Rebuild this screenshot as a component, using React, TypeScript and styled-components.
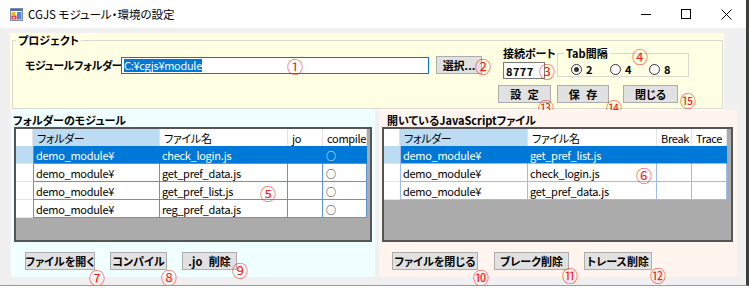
import React from "react";
import styled, { createGlobalStyle } from "styled-components";

const GlobalStyle = createGlobalStyle`
  html, body {
    margin: 0;
    padding: 0;
    background: #ffffff;
  }
  body {
    font-family: "Noto Sans CJK JP", "Noto Sans", sans-serif;
    font-size: 12px;
    color: #000;
  }
  * {
    box-sizing: border-box;
  }
`;

const Window = styled.div`
  position: relative;
  width: 749px;
  height: 286px;
  background: #f0f0f0;
  border-right: 3px solid #3b3f3b;
  border-bottom: 1px solid #9a9a9a;
  display: flex;
  flex-direction: column;
  overflow: hidden;
  font-feature-settings: "palt";
`;

const TitleBar = styled.div`
  height: 28px;
  background: #ffffff;
  display: flex;
  align-items: center;
  padding-left: 10px;
  flex-shrink: 0;
`;

const Title = styled.span`
  margin-left: 5px;
  font-size: 11.5px;
  color: #000;
`;

const CaptionButtons = styled.div`
  margin-left: auto;
  display: flex;
  height: 100%;
`;

const CaptionButton = styled.div`
  width: 40px;
  height: 28px;
  display: flex;
  align-items: center;
  justify-content: center;
`;

const Client = styled.div`
  flex: 1;
  display: flex;
  flex-direction: column;
  padding: 5px 0 0 10px;
`;

const ProjectPanel = styled.div`
  position: relative;
  width: 714px;
  height: 77px;
  background: #ffffe4;
  padding: 1px 1px 1px 2px;
  display: flex;
  overflow: hidden;
  flex-shrink: 0;
`;

const Frame = styled.fieldset<{ $w?: number; $h?: number }>`
  margin: 0;
  padding: 0;
  border: 1px solid #d9d9d0;
  ${(p) => (p.$w ? `width: ${p.$w}px;` : "flex: 1;")}
  ${(p) => (p.$h ? `height: ${p.$h}px;` : "")}
`;

const Legend = styled.legend<{ $indent: number }>`
  margin-left: ${(p) => p.$indent}px;
  padding: 0 2px;
  font-size: 11px;
  font-weight: bold;
  line-height: 13px;
`;

const FrameBody = styled.div`
  display: flex;
  align-items: flex-start;
  padding: 0 0 0 12px;
`;

const FolderRow = styled.div`
  display: flex;
  align-items: center;
  margin-top: 9px;
`;

const FieldLabel = styled.span`
  width: 96px;
  flex-shrink: 0;
  font-size: 11px;
  font-weight: bold;
  letter-spacing: -0.5px;
  white-space: nowrap;
`;

const TextBox = styled.div<{ $w: number; $focused?: boolean }>`
  width: ${(p) => p.$w}px;
  height: 17px;
  background: #ffffff;
  border: 1px solid ${(p) => (p.$focused ? "#0078d7" : "#7a7a7a")};
  display: flex;
  align-items: center;
  padding-left: 2px;
  font-size: 11px;
  letter-spacing: -0.3px;
  white-space: nowrap;
  overflow: hidden;
  flex-shrink: 0;
`;

const Selection = styled.span`
  background: #0078d7;
  color: #ffffff;
  line-height: 13px;
`;

const PortValue = styled.span`
  font-weight: bold;
  font-size: 11px;
  letter-spacing: 0.4px;
`;

const Button = styled.div<{ $w: number; $gap?: number }>`
  width: ${(p) => p.$w}px;
  height: 18px;
  margin-left: ${(p) => p.$gap ?? 0}px;
  background: #e1e1e1;
  border: 1px solid #adadad;
  display: flex;
  align-items: center;
  justify-content: center;
  font-size: 11px;
  font-weight: bold;
  white-space: nowrap;
  word-spacing: 4px;
  flex-shrink: 0;
`;

const RightBlock = styled.div`
  margin-left: 16px;
  display: flex;
  flex-direction: column;
`;

const TopRow = styled.div`
  display: flex;
  align-items: flex-start;
  margin-left: 5px;
`;

const PortCol = styled.div`
  width: 54px;
  display: flex;
  flex-direction: column;
`;

const PortLabel = styled.span`
  font-size: 11px;
  font-weight: bold;
  line-height: 13px;
  margin-bottom: 2px;
  white-space: nowrap;
`;

const RadioRow = styled.div`
  display: flex;
  padding-left: 13px;
  margin-top: 4px;
`;

const RadioItem = styled.div`
  width: 39px;
  display: flex;
  align-items: center;
  font-size: 11px;
  font-weight: bold;
  line-height: 11px;
`;

const RadioCircle = styled.span<{ $checked?: boolean }>`
  width: 11px;
  height: 11px;
  border-radius: 50%;
  border: 1px solid #333333;
  background: #ffffff;
  margin-right: 4px;
  display: flex;
  align-items: center;
  justify-content: center;
  &::after {
    content: "";
    width: 5px;
    height: 5px;
    border-radius: 50%;
    background: ${(p) => (p.$checked ? "#333333" : "transparent")};
  }
`;

const ButtonRow = styled.div`
  display: flex;
  margin-top: 6px;
`;

const Columns = styled.div`
  display: flex;
  gap: 4px;
  margin-left: 1px;
  height: 167px;
`;

const Section = styled.div<{ $w: number; $bg: string; $pad: number }>`
  width: ${(p) => p.$w}px;
  background: ${(p) => p.$bg};
  padding: 3px 0 0 ${(p) => p.$pad}px;
  display: flex;
  flex-direction: column;
`;

const SectionLabel = styled.div<{ $indent: number }>`
  margin-left: ${(p) => p.$indent}px;
  font-size: 11px;
  font-weight: bold;
  line-height: 14px;
  white-space: nowrap;
`;

const GridBox = styled.div<{ $w: number; $indent: number }>`
  width: ${(p) => p.$w}px;
  height: 115px;
  margin-left: ${(p) => p.$indent}px;
  background: #ababab;
  border: 2px solid #555555;
  overflow: hidden;
`;

const Table = styled.table`
  border-collapse: separate;
  border-spacing: 0;
  table-layout: fixed;
  font-size: 11px;
  letter-spacing: -0.3px;
`;

const HeadCell = styled.th<{ $active?: boolean }>`
  height: 17px;
  padding: 0 0 0 4px;
  background: ${(p) => (p.$active ? "#bcdcf4" : "#ffffff")};
  border-right: 1px solid #e3e3e3;
  font-weight: normal;
  text-align: left;
  white-space: nowrap;
  overflow: hidden;
`;

const RowHead = styled.th<{ $selected?: boolean }>`
  height: 18px;
  padding: 0;
  background: ${(p) => (p.$selected ? "#bcdcf4" : "#ffffff")};
  border-bottom: 1px solid #e6e6e6;
`;

const Cell = styled.td<{ $selected?: boolean; $line: string; $first?: boolean }>`
  height: 18px;
  padding: 0 0 0 2px;
  background: ${(p) => (p.$selected ? "#0078d7" : "#ffffff")};
  color: ${(p) => (p.$selected ? "#ffffff" : "#000000")};
  border-right: 1px solid ${(p) => (p.$selected ? "#0078d7" : p.$line)};
  border-bottom: 1px solid ${(p) => p.$line};
  border-left: ${(p) => (p.$first ? `1px solid ${p.$line}` : "none")};
  white-space: nowrap;
  overflow: hidden;
`;

const Mark = styled.span`
  font-size: 10px;
  padding-left: 1px;
`;

const ActionRow = styled.div<{ $indent: number }>`
  display: flex;
  margin-top: 10px;
  margin-left: ${(p) => p.$indent}px;
`;

const Marker = styled.span<{ $x: number; $y: number }>`
  position: absolute;
  left: ${(p) => p.$x}px;
  top: ${(p) => p.$y}px;
  transform: translate(-50%, -50%);
  color: #ff1a1a;
  font-size: 16px;
  line-height: 1;
  pointer-events: none;
`;

type Col = { label: string; width: number };

const leftCols: Col[] = [
  { label: "フォルダー", width: 127 },
  { label: "ファイル名", width: 128 },
  { label: "jo", width: 35 },
  { label: "compile", width: 44 },
];

const leftRows = [
  ["demo_module¥", "check_login.js", "", "○"],
  ["demo_module¥", "get_pref_data.js", "", "○"],
  ["demo_module¥", "get_pref_list.js", "", "○"],
  ["demo_module¥", "reg_pref_data.js", "", "○"],
];

const rightCols: Col[] = [
  { label: "フォルダー", width: 128 },
  { label: "ファイル名", width: 129 },
  { label: "Break", width: 35 },
  { label: "Trace", width: 35 },
];

const rightRows = [
  ["demo_module¥", "get_pref_list.js", "", ""],
  ["demo_module¥", "check_login.js", "", ""],
  ["demo_module¥", "get_pref_data.js", "", ""],
];

const DataGrid: React.FC<{
  cols: Col[];
  rows: string[][];
  width: number;
  indent: number;
  line: string;
  rowHeadWidth: number;
}> = ({ cols, rows, width, indent, line, rowHeadWidth }) => (
  <GridBox $w={width} $indent={indent}>
    <Table>
      <colgroup>
        <col style={{ width: rowHeadWidth }} />
        {cols.map((c) => (
          <col key={c.label} style={{ width: c.width }} />
        ))}
      </colgroup>
      <thead>
        <tr>
          <HeadCell />
          {cols.map((c, i) => (
            <HeadCell key={c.label} $active={i === 0}>
              {c.label}
            </HeadCell>
          ))}
        </tr>
      </thead>
      <tbody>
        {rows.map((r, ri) => (
          <tr key={ri}>
            <RowHead $selected={ri === 0} />
            {r.map((v, ci) => (
              <Cell key={ci} $selected={ri === 0} $line={line} $first={ci === 0}>
                {v === "○" ? <Mark>{v}</Mark> : v}
              </Cell>
            ))}
          </tr>
        ))}
      </tbody>
    </Table>
  </GridBox>
);

const AppIcon = () => (
  <svg width="13" height="13" viewBox="0 0 13 13">
    <rect x="0.5" y="0.5" width="12" height="12" fill="#ffffff" stroke="#7d8aa8" />
    <rect x="1" y="1" width="11" height="2" fill="#4b6fb5" />
    <rect x="1.5" y="4" width="4" height="3" fill="#f3b21b" />
    <rect x="1.5" y="7.5" width="5" height="4" fill="#e0262a" />
    <rect x="2.8" y="8.8" width="2.4" height="1.6" fill="#ffffff" />
    <rect x="7" y="4" width="4.5" height="7.5" fill="#4f86d6" />
  </svg>
);

const App: React.FC = () => {
  return (
    <>
      <GlobalStyle />
      <Window>
        <TitleBar>
          <AppIcon />
          <Title>CGJS モジュール・環境の設定</Title>
          <CaptionButtons>
            <CaptionButton>
              <svg width="10" height="10" viewBox="0 0 10 10">
                <line x1="0" y1="5.5" x2="10" y2="5.5" stroke="#000" strokeWidth="1" />
              </svg>
            </CaptionButton>
            <CaptionButton>
              <svg width="10" height="10" viewBox="0 0 10 10">
                <rect x="0.5" y="0.5" width="9" height="9" fill="none" stroke="#000" strokeWidth="1" />
              </svg>
            </CaptionButton>
            <CaptionButton>
              <svg width="11" height="11" viewBox="0 0 11 11">
                <path d="M0.5 0.5 L10.5 10.5 M10.5 0.5 L0.5 10.5" stroke="#000" strokeWidth="1" />
              </svg>
            </CaptionButton>
          </CaptionButtons>
        </TitleBar>

        <Client>
          <ProjectPanel>
            <Frame>
              <Legend $indent={3}>プロジェクト</Legend>
              <FrameBody>
                <FolderRow>
                  <FieldLabel>モジュールフォルダー</FieldLabel>
                  <TextBox $w={308} $focused>
                    <Selection>C:¥cgjs¥module</Selection>
                  </TextBox>
                  <Button $w={46} $gap={7}>
                    選択...
                  </Button>
                </FolderRow>
                <RightBlock>
                  <TopRow>
                    <PortCol>
                      <PortLabel>接続ポート</PortLabel>
                      <TextBox $w={42}>
                        <PortValue>8777</PortValue>
                      </TextBox>
                    </PortCol>
                    <Frame $w={124} $h={30}>
                      <Legend $indent={6}>Tab間隔</Legend>
                      <RadioRow>
                        <RadioItem>
                          <RadioCircle $checked />2
                        </RadioItem>
                        <RadioItem>
                          <RadioCircle />4
                        </RadioItem>
                        <RadioItem>
                          <RadioCircle />8
                        </RadioItem>
                      </RadioRow>
                    </Frame>
                  </TopRow>
                  <ButtonRow>
                    <Button $w={53}>設 定</Button>
                    <Button $w={52} $gap={6}>
                      保 存
                    </Button>
                    <Button $w={55} $gap={14}>
                      閉じる
                    </Button>
                  </ButtonRow>
                </RightBlock>
              </FrameBody>
            </Frame>
            <Marker $x={285} $y={33}>①</Marker>
            <Marker $x={473} $y={33}>②</Marker>
            <Marker $x={537} $y={38}>③</Marker>
            <Marker $x={630} $y={23}>④</Marker>
            <Marker $x={536} $y={74}>⑬</Marker>
            <Marker $x={604} $y={74}>⑭</Marker>
          </ProjectPanel>

          <Columns>
            <Section $w={364} $bg="#f0ffff" $pad={2}>
              <SectionLabel $indent={0}>フォルダーのモジュール</SectionLabel>
              <DataGrid
                cols={leftCols}
                rows={leftRows}
                width={358}
                indent={1}
                line="#5a96dc"
                rowHeadWidth={17}
              />
              <ActionRow $indent={12}>
                <Button $w={70}>ファイルを開く</Button>
                <Button $w={57} $gap={15}>
                  コンパイル
                </Button>
                <Button $w={55} $gap={15}>
                  .jo 削除
                </Button>
              </ActionRow>
            </Section>
            <Section $w={358} $bg="#fff5ee" $pad={3}>
              <SectionLabel $indent={5}>開いているJavaScriptファイル</SectionLabel>
              <DataGrid
                cols={rightCols}
                rows={rightRows}
                width={351}
                indent={0}
                line="#9abdf0"
                rowHeadWidth={16}
              />
              <ActionRow $indent={10}>
                <Button $w={86}>ファイルを閉じる</Button>
                <Button $w={75} $gap={16}>
                  ブレーク削除
                </Button>
                <Button $w={68} $gap={15}>
                  トレース削除
                </Button>
              </ActionRow>
            </Section>
          </Columns>
        </Client>

        <Marker $x={688} $y={100}>⑮</Marker>
        <Marker $x={268} $y={193}>⑤</Marker>
        <Marker $x={644} $y={175}>⑥</Marker>
        <Marker $x={97} $y={277}>⑦</Marker>
        <Marker $x={169} $y={277}>⑧</Marker>
        <Marker $x={240} $y={270}>⑨</Marker>
        <Marker $x={481} $y={277}>⑩</Marker>
        <Marker $x={570} $y={275}>⑪</Marker>
        <Marker $x={658} $y={275}>⑫</Marker>
      </Window>
    </>
  );
};

export default App;
